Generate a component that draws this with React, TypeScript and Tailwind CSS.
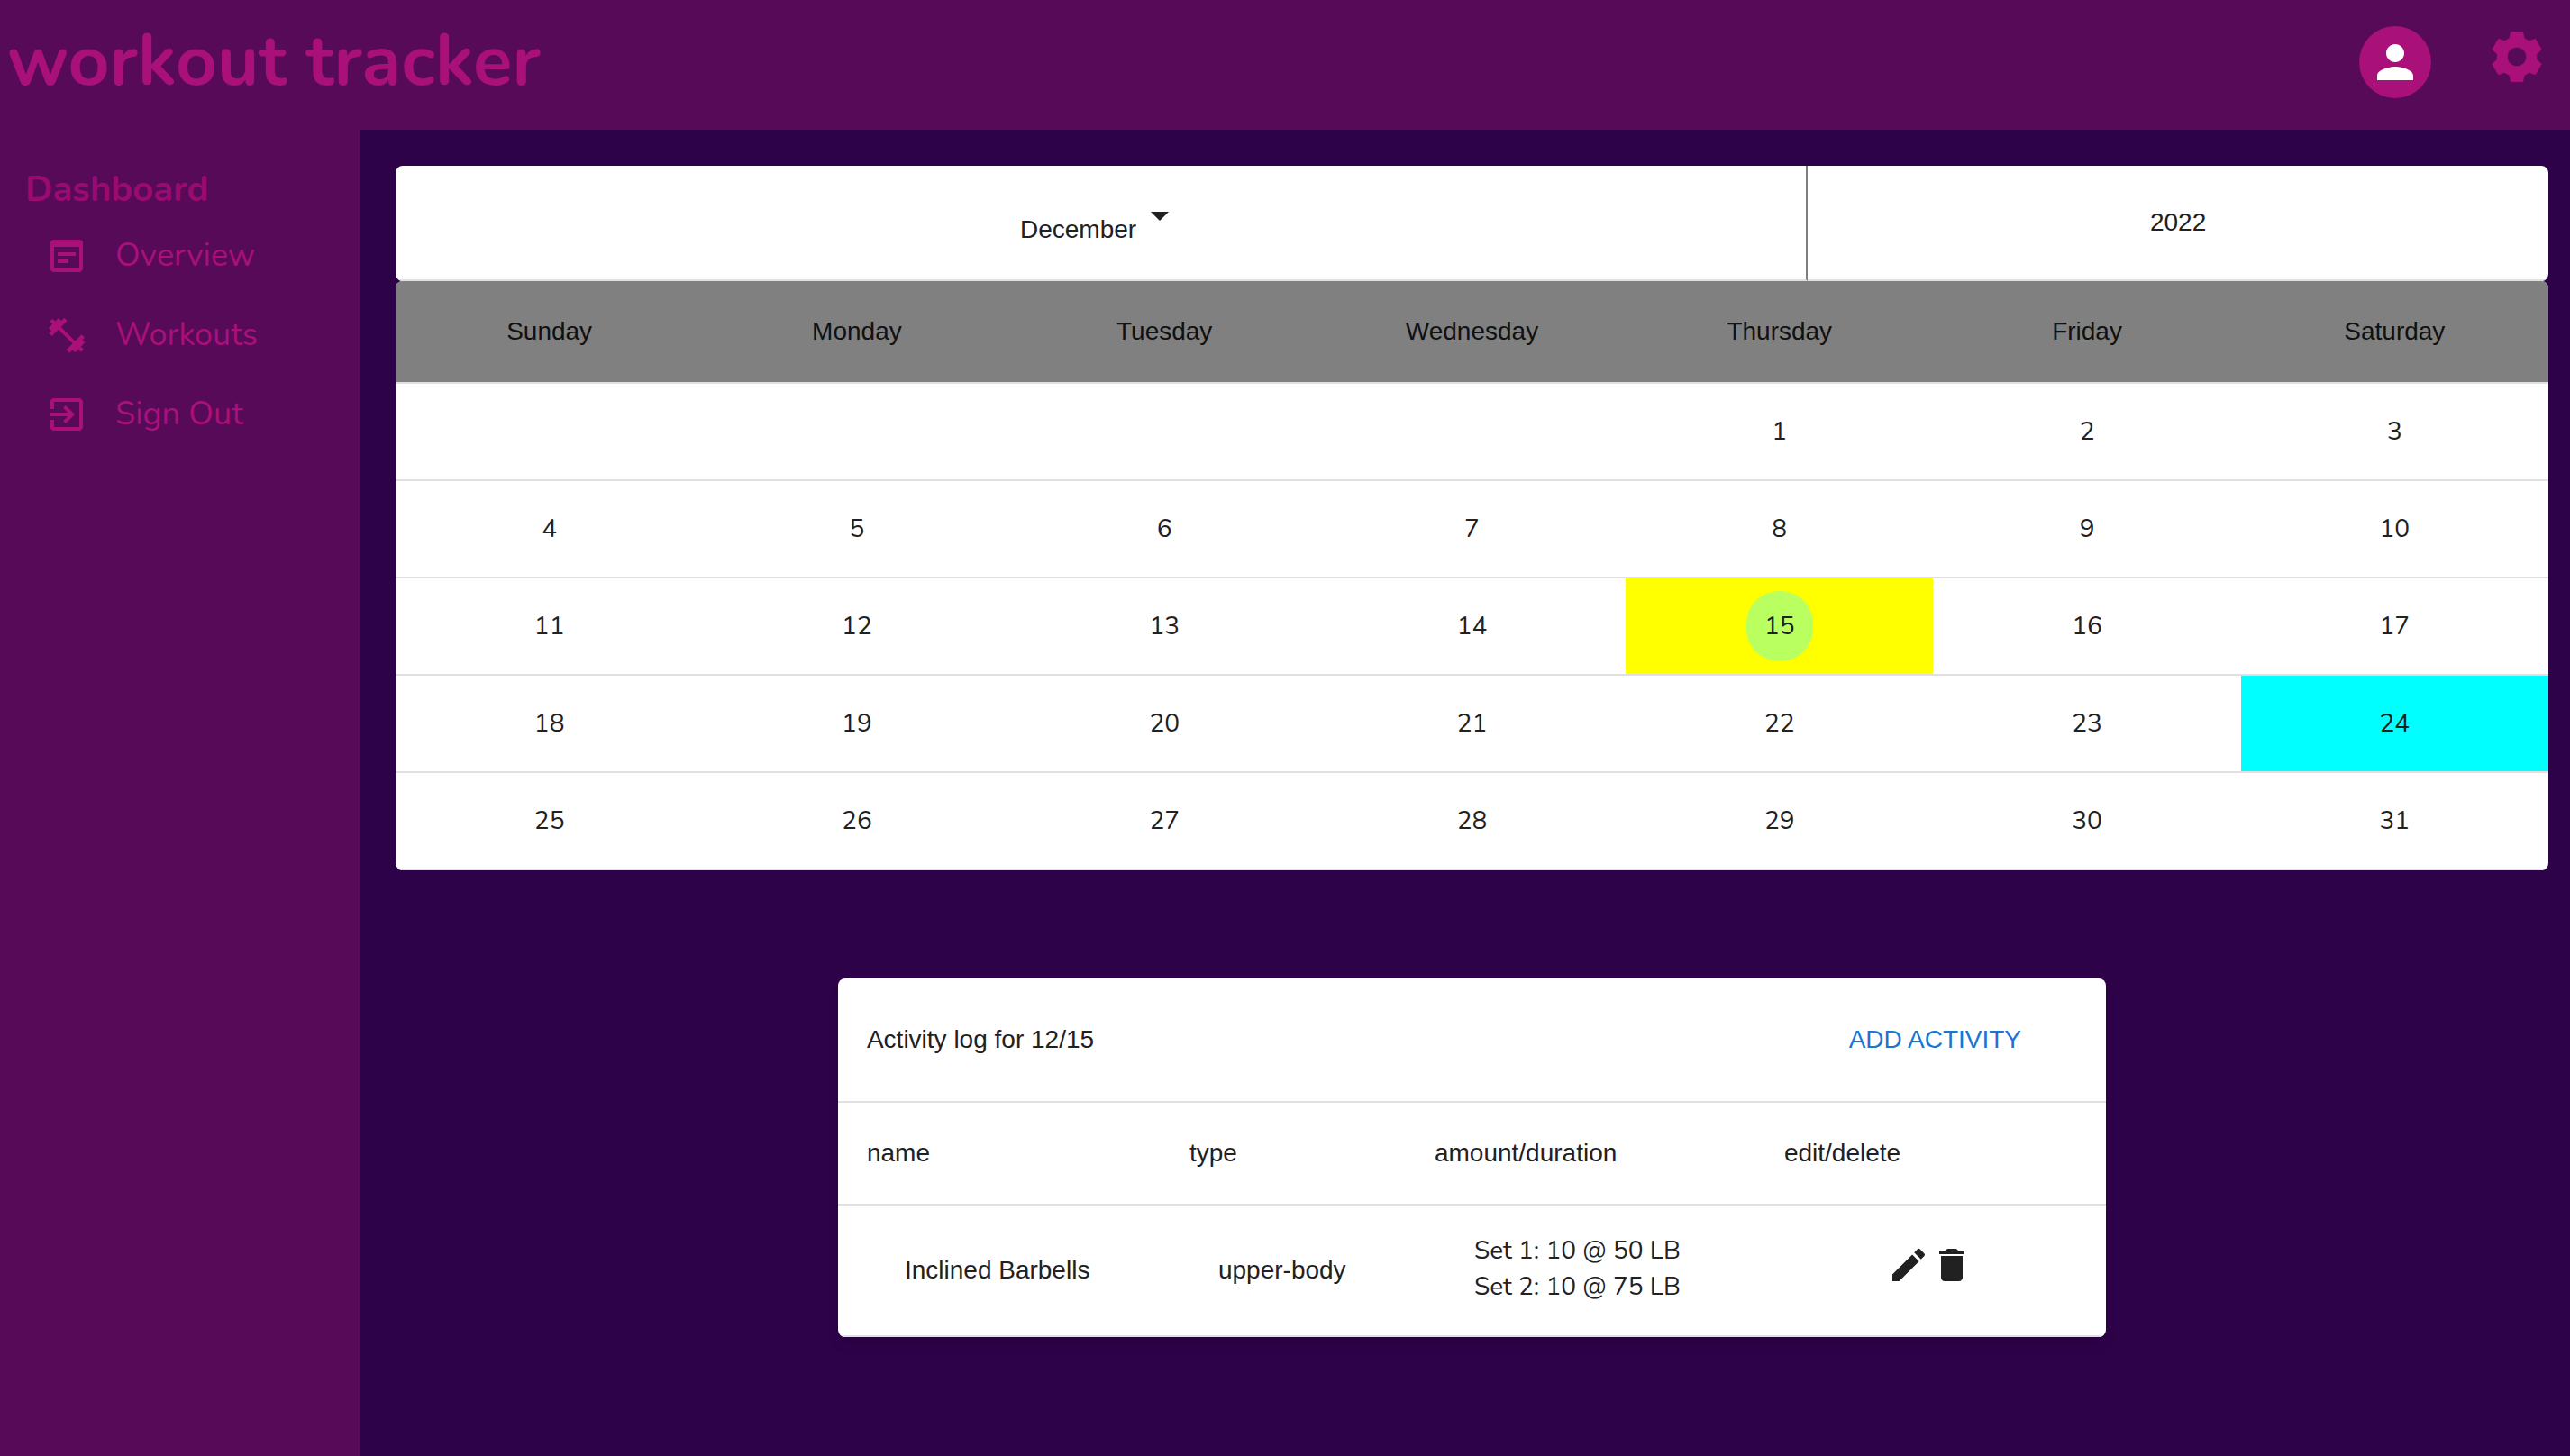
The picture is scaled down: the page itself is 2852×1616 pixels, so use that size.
import {
  MdArrowDropDown,
  MdDelete,
  MdEdit,
  MdExitToApp,
  MdPerson,
  MdWysiwyg,
} from "react-icons/md";

const WEEKDAYS = ["Sunday", "Monday", "Tuesday", "Wednesday", "Thursday", "Friday", "Saturday"];
const MONTHS = [
  "January", "February", "March", "April", "May", "June",
  "July", "August", "September", "October", "November", "December",
];
const WEEKS: (number | null)[][] = [
  [null, null, null, null, 1, 2, 3],
  [4, 5, 6, 7, 8, 9, 10],
  [11, 12, 13, 14, 15, 16, 17],
  [18, 19, 20, 21, 22, 23, 24],
  [25, 26, 27, 28, 29, 30, 31],
];
const SELECTED = 15;
const TODAY = 24;

function DumbbellIcon() {
  return (
    <svg viewBox="150 533 144 144" className="size-12" fill="none" stroke="currentColor">
      <path strokeWidth="12" d="M190 573L254 637" />
      <path strokeWidth="14" d="M168 603L219 552M277 608L226 659" />
      <path strokeWidth="17" d="M168 587L201 554M277 624L244 657" />
      <path strokeWidth="17" d="M172 565L181 556M273 646L264 655" />
    </svg>
  );
}

function GearIcon() {
  return (
    <svg viewBox="-99 -102 198 198" className="size-[66px]" fill="currentColor">
      <path
        fillRule="evenodd"
        stroke="currentColor"
        strokeWidth="2"
        strokeLinejoin="round"
        d="M-25-61L-20-83H20L25-61Q33-58 40.3-52.2L61.5-59.5L82.2-24L65.3-8.8Q66 0 65.3 8.8L82.2 24L61.5 59.5L40.3 52.2Q33 58 25 61L20 83H-20L-25 61Q-33 58-40.3 52.2L-61.5 59.5L-82.2 24L-65.3 8.8Q-66 0-65.3-8.8L-82.2-24L-61.5-59.5L-40.3-52.2Q-33-58-25-61ZM32 0A32 32 0 1 0-32 0A32 32 0 1 0 32 0Z"
      />
    </svg>
  );
}

const NAV = [
  { label: "Overview", icon: <MdWysiwyg className="size-12" /> },
  { label: "Workouts", icon: <DumbbellIcon /> },
  { label: "Sign Out", icon: <MdExitToApp className="size-12" /> },
];

function Header() {
  return (
    <header className="flex h-36 items-start justify-between bg-[#570a57] pl-2 pr-[26px]">
      <h1 className="pt-5 font-[Nunito,Lato,sans-serif] text-[80px] leading-24 font-bold">workout tracker</h1>
      <div className="flex items-start gap-[62px] pt-[29px]">
        <button aria-label="Account" className="flex size-20 items-center justify-center rounded-full bg-[#a91079] text-white">
          <MdPerson className="size-[60px]" />
        </button>
        <button aria-label="Settings">
          <GearIcon />
        </button>
      </div>
    </header>
  );
}

function Sidebar() {
  return (
    <aside className="w-[399px] shrink-0 bg-[#570a57] pt-10 pl-7 font-[Nunito,Lato,sans-serif]">
      <h2 className="text-[40px] leading-[52px] font-bold text-[#9b0a70]">Dashboard</h2>
      <nav className="pt-1 pl-[22px]">
        {NAV.map((item) => (
          <a key={item.label} href="#" className="flex h-22 items-center gap-[30px] text-4xl">
            {item.icon}
            {item.label}
          </a>
        ))}
      </nav>
    </aside>
  );
}

function Calendar() {
  return (
    <section>
      <div className="flex h-32 overflow-hidden rounded-lg bg-white">
        <div className="flex w-[65.6%] items-center justify-center border-r-2 border-b-2 border-r-[#808080] border-b-[#e0e0e0]">
          <div className="relative flex items-center pt-4">
            <select aria-label="Month" defaultValue="December" className="field-sizing-content appearance-none bg-transparent pr-[50px]">
              {MONTHS.map((m) => (
                <option key={m}>{m}</option>
              ))}
            </select>
            <MdArrowDropDown className="pointer-events-none absolute -top-1 right-0 size-12" />
          </div>
        </div>
        <div className="flex flex-1 items-center justify-center border-b-2 border-[#e0e0e0]">2022</div>
      </div>
      <div className="overflow-hidden rounded-lg bg-white">
        <table className="w-full table-fixed border-separate border-spacing-0 text-center">
          <thead>
            <tr className="h-[114px] bg-[#808080] text-[#111111]">
              {WEEKDAYS.map((d) => (
                <th key={d} className="border-b-2 border-[#e0e0e0] p-0 font-normal">{d}</th>
              ))}
            </tr>
          </thead>
          <tbody className="font-[Nunito,Lato,sans-serif]">
            {WEEKS.map((week, i) => (
              <tr key={i} className="h-27">
                {week.map((day, j) => (
                  <td
                    key={j}
                    className={
                      day === SELECTED
                        ? "border-b-2 border-[#e0e0e0] bg-[#ffff00] p-0"
                        : day === TODAY
                          ? "border-b-2 border-[#e0e0e0] bg-[#00ffff] p-0"
                          : "border-b-2 border-[#e0e0e0] p-0"
                    }
                  >
                    {day !== null && (
                      <button
                        className={
                          day === SELECTED ? "h-[78px] w-[74px] rounded-[36px] bg-[#b9ff60]" : "h-[78px] w-[74px]"
                        }
                      >
                        {day}
                      </button>
                    )}
                  </td>
                ))}
              </tr>
            ))}
          </tbody>
        </table>
      </div>
    </section>
  );
}

function ActivityLog() {
  return (
    <section className="mx-auto w-[58.9%] overflow-hidden rounded-lg bg-white shadow-lg">
      <div className="flex h-[138px] items-center justify-between border-b-2 border-[#e0e0e0] pr-[94px] pl-8">
        <h2>Activity log for 12/15</h2>
        <button className="text-[#1976d2]">ADD ACTIVITY</button>
      </div>
      <table className="w-full table-fixed border-separate border-spacing-0 text-left">
        <colgroup>
          <col className="w-[358px]" />
          <col className="w-[272px]" />
          <col className="w-[388px]" />
          <col />
        </colgroup>
        <thead>
          <tr className="h-[114px]">
            <th className="border-b-2 border-[#e0e0e0] py-0 pl-8 font-normal">name</th>
            <th className="border-b-2 border-[#e0e0e0] py-0 pl-8 font-normal">type</th>
            <th className="border-b-2 border-[#e0e0e0] py-0 pl-8 font-normal">amount/duration</th>
            <th className="border-b-2 border-[#e0e0e0] py-0 pl-8 font-normal">edit/delete</th>
          </tr>
        </thead>
        <tbody>
          <tr className="h-[146px]">
            <td className="border-b-2 border-[#e0e0e0] py-0 pl-[74px]">Inclined Barbells</td>
            <td className="border-b-2 border-[#e0e0e0] py-0 pl-16">upper-body</td>
            <td className="border-b-2 border-[#e0e0e0] pt-0 pb-1 pl-19 font-[Nunito,Lato,sans-serif]">
              <ul>
                <li>Set 1: 10 @ 50 LB</li>
                <li>Set 2: 10 @ 75 LB</li>
              </ul>
            </td>
            <td className="border-b-2 border-[#e0e0e0] pt-0 pb-3 pl-[146px]">
              <div className="flex">
                <button aria-label="Edit activity"><MdEdit className="size-12" /></button>
                <button aria-label="Delete activity"><MdDelete className="size-12" /></button>
              </div>
            </td>
          </tr>
        </tbody>
      </table>
    </section>
  );
}

export default function App() {
  return (
    <div className="flex min-h-screen flex-col bg-[#2e0249] text-[#a91079]">
      <Header />
      <div className="flex flex-1">
        <Sidebar />
        <main className="flex flex-1 flex-col gap-30 pt-10 pr-6 pl-10 font-['Liberation_Sans',Arial,sans-serif] text-[28px] leading-10 text-[#212121]">
          <Calendar />
          <ActivityLog />
        </main>
      </div>
    </div>
  );
}
